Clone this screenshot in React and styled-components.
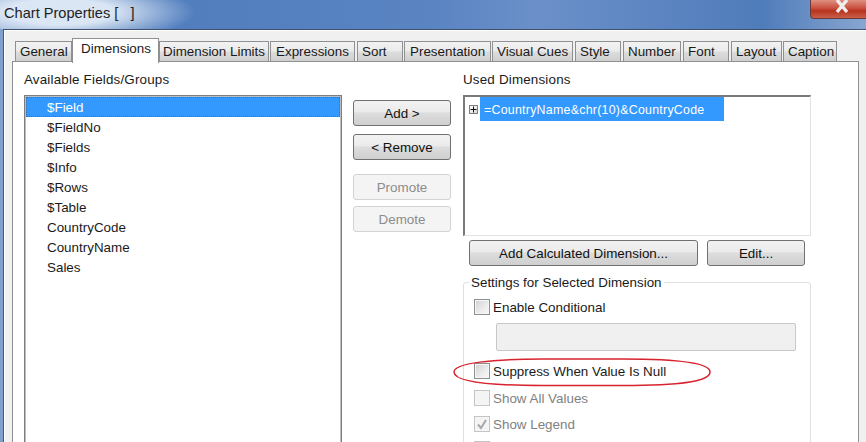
import React from "react";
import styled, { createGlobalStyle } from "styled-components";

const GlobalStyle = createGlobalStyle`
  html, body {
    margin: 0;
    padding: 0;
    overflow: hidden;
    background: #f0f0f0;
  }
  * {
    box-sizing: border-box;
  }
`;

const Window = styled.div`
  width: 866px;
  height: 442px;
  overflow: hidden;
  display: flex;
  flex-direction: column;
  font-family: "Liberation Sans", Arial, sans-serif;
  font-size: 13.4px;
  color: #1a1a1a;
  background: linear-gradient(90deg, #7fa0cf 0%, #4f7cbd 12%, #5a84c2 50%, #6b90c9 62%, #4f7cba 88%, #88a6d1 100%);
`;

const TitleBar = styled.div`
  height: 29px;
  flex: none;
  display: flex;
  justify-content: space-between;
  padding-left: 4px;
  background: radial-gradient(ellipse 135px 32px at 60px 12px, rgba(225, 235, 247, 0.95) 40%, rgba(225, 235, 247, 0) 100%);
`;

const Title = styled.div`
  font-size: 14.6px;
  line-height: 26px;
  color: #222;
`;

const CloseButton = styled.div`
  width: 56px;
  height: 19px;
  padding-left: 6px;
  display: flex;
  align-items: flex-start;
  justify-content: center;
  border: 1px solid #6b3a3a;
  border-top: none;
  border-right: none;
  border-radius: 0 0 0 4px;
  background: linear-gradient(180deg, #e09080 0%, #c9503f 45%, #b8331f 60%, #c8604a 100%);
`;

const WindowBody = styled.div`
  flex: 1;
  min-height: 0;
  margin-left: 3px;
  padding: 8px 0 0 8px;
  border-top: 1px solid #3e5170;
  border-left: 1px solid #46587a;
  background: #f0f0f0;
  box-shadow: inset 1px 1px 0 #fff;
`;

const TabRow = styled.div`
  position: relative;
  z-index: 1;
  height: 24px;
  padding-left: 3px;
  display: flex;
  align-items: flex-end;
`;

const Tab = styled.div`
  width: ${(p) => p.$w}px;
  flex: none;
  margin-left: ${(p) => p.$gap ?? 0}px;
  height: ${(p) => (p.$active ? 25 : 21)}px;
  margin-bottom: ${(p) => (p.$active ? -1 : 0)}px;
  padding-left: ${(p) => p.$pad}px;
  line-height: ${(p) => (p.$active ? 20 : 19)}px;
  white-space: nowrap;
  border: 1px solid #8e9092;
  border-bottom: ${(p) => (p.$active ? "none" : "1px solid #8e9092")};
  background: ${(p) => (p.$active ? "#fff" : "linear-gradient(180deg, #f2f2f2 0%, #ebebeb 45%, #dcdcdc 55%, #cfcfcf 100%)")};
`;

const Panel = styled.div`
  width: 847px;
  height: 400px;
  margin-top: -1px;
  padding: 9px 0 0 11px;
  display: flex;
  background: #fff;
  border: 1px solid #8e9092;
`;

const AvailableColumn = styled.div`
  width: 318px;
  flex: none;
`;

const Caption = styled.div`
  height: 24px;
  line-height: 18px;
  letter-spacing: 0.18px;
`;

const FieldList = styled.div`
  height: 360px;
  padding: 1px;
  border: 1px solid #7e7e7e;
  box-shadow: inset 0 0 0 1px #bdbdbd;
`;

const FieldRow = styled.div`
  height: 20px;
  line-height: 22px;
  padding-left: 21px;
  ${(p) => p.$selected && "background: #3399ff; color: #fff; outline: 1px dotted #4a6f9e; outline-offset: -1px;"}
`;

const ButtonColumn = styled.div`
  width: 98px;
  flex: none;
  margin: 29px 12px 0 11px;
  display: flex;
  flex-direction: column;
`;

const Button = styled.div`
  height: 26px;
  flex: none;
  width: ${(p) => (p.$w ? `${p.$w}px` : "100%")};
  margin-top: ${(p) => p.$top ?? 0}px;
  display: flex;
  align-items: center;
  justify-content: center;
  border-radius: 3px;
  border: 1px solid ${(p) => (p.$disabled ? "#d3d3d3" : "#707070")};
  color: ${(p) => (p.$disabled ? "#8c8c8c" : "#111")};
  background: ${(p) => (p.$disabled ? "#f4f4f4" : "linear-gradient(180deg, #f2f2f2 0%, #ebebeb 45%, #dddddd 50%, #cfcfcf 100%)")};
`;

const UsedColumn = styled.div`
  width: 348px;
  flex: none;
`;

const UsedList = styled.div`
  height: 141px;
  padding: 0 0 0 4px;
  display: flex;
  border: 1px solid #e3e3e3;
  border-top: 2px solid #7a7a7a;
  border-left: 2px solid #7a7a7a;
`;

const Expander = styled.div`
  width: 9px;
  height: 9px;
  margin: 8px 2px 0 0;
  flex: none;
  border: 1px solid #808080;
  background: linear-gradient(135deg, #fff 0%, #d8d8d8 100%);
  display: flex;
  align-items: center;
  justify-content: center;
`;

const ExpressionText = styled.div`
  width: 244px;
  height: 24px;
  padding-left: 4px;
  line-height: 26px;
  font-size: 12.4px;
  letter-spacing: 0.25px;
  white-space: nowrap;
  color: #fff;
  background: #3399ff;
`;

const ButtonRow = styled.div`
  margin: 4px 0 0 6px;
  display: flex;
  gap: 9px;
`;

const SettingsGroup = styled.div`
  position: relative;
  height: 200px;
  margin-top: 16px;
  padding: 16px 0 0 10px;
  border: 1px solid #dcdfe3;
  border-radius: 3px;
`;

const GroupLabel = styled.div`
  position: absolute;
  top: -8px;
  left: 5px;
  padding: 0 2px;
  line-height: 16px;
  background: #fff;
`;

const CheckRow = styled.div`
  height: 16px;
  margin-bottom: ${(p) => p.$gap ?? 10}px;
  display: flex;
  align-items: center;
  gap: 3px;
  color: ${(p) => (p.$disabled ? "#7f7f7f" : "#1a1a1a")};
`;

const CheckLabel = styled.span`
  padding-top: 2px;
  line-height: 16px;
`;

const CheckBox = styled.div`
  width: 16px;
  height: 16px;
  flex: none;
  display: flex;
  align-items: center;
  justify-content: center;
  border: 1px solid ${(p) => (p.$disabled ? "#c4c4c4" : "#8e8f8f")};
  background: ${(p) => (p.$disabled ? "#f4f4f4" : "linear-gradient(135deg, #d2d2d2 0%, #ececec 60%, #f8f8f8 100%)")};
  box-shadow: inset 0 0 0 1px #f6f6f6;
`;

const ConditionInput = styled.div`
  width: 300px;
  height: 28px;
  margin: 0 0 12px 22px;
  background: #f0f0f0;
  border: 1px solid #c8c8c8;
  border-radius: 2px;
`;

const Highlight = styled.svg`
  position: absolute;
  left: -11px;
  top: 75px;
  overflow: visible;
`;

const fields = ["$Field", "$FieldNo", "$Fields", "$Info", "$Rows", "$Table", "CountryCode", "CountryName", "Sales"];

const tabs = [
  { label: "General", w: 57, pad: 4 },
  { label: "Dimensions", w: 87, pad: 8, active: true },
  { label: "Dimension Limits", w: 110, pad: 3 },
  { label: "Expressions", w: 85, pad: 5, gap: 1 },
  { label: "Sort", w: 46, pad: 4, gap: 2 },
  { label: "Presentation", w: 87, pad: 5, gap: 1 },
  { label: "Visual Cues", w: 81, pad: 4, gap: 1 },
  { label: "Style", w: 46, pad: 4, gap: 2 },
  { label: "Number", w: 58, pad: 4, gap: 2 },
  { label: "Font", w: 46, pad: 4, gap: 2 },
  { label: "Layout", w: 51, pad: 4, gap: 2 },
  { label: "Caption", w: 54, pad: 4, gap: 1 },
];

const Check = ({ label, checked, disabled, gap }) => (
  <CheckRow $disabled={disabled} $gap={gap}>
    <CheckBox $disabled={disabled}>
      {checked && (
        <svg width="12" height="12" viewBox="0 0 12 12">
          <path d="M2 6.5 L5 10 L10 2" fill="none" stroke="#a8a8a8" strokeWidth="2" />
        </svg>
      )}
    </CheckBox>
    <CheckLabel>{label}</CheckLabel>
  </CheckRow>
);

export default function App() {
  return (
    <Window>
      <GlobalStyle />
      <TitleBar>
        <Title>Chart Properties [ &nbsp; ]</Title>
        <CloseButton>
          <svg width="16" height="14" viewBox="0 0 16 14">
            <path d="M3 0 L13 12 M13 0 L3 12" stroke="#eee" strokeWidth="3.4" fill="none" />
          </svg>
        </CloseButton>
      </TitleBar>
      <WindowBody>
        <TabRow>
          {tabs.map((t) => (
            <Tab key={t.label} $w={t.w} $pad={t.pad} $gap={t.gap} $active={t.active}>
              {t.label}
            </Tab>
          ))}
        </TabRow>
        <Panel>
          <AvailableColumn>
            <Caption>Available Fields/Groups</Caption>
            <FieldList>
              {fields.map((f, i) => (
                <FieldRow key={f} $selected={i === 0}>
                  {f}
                </FieldRow>
              ))}
            </FieldList>
          </AvailableColumn>
          <ButtonColumn>
            <Button>Add &gt;</Button>
            <Button $top={8}>&lt; Remove</Button>
            <Button $top={14} $disabled>Promote</Button>
            <Button $top={6} $disabled>Demote</Button>
          </ButtonColumn>
          <UsedColumn>
            <Caption>Used Dimensions</Caption>
            <UsedList>
              <Expander>
                <svg width="7" height="7" viewBox="0 0 7 7">
                  <path d="M0.5 3.5 H6.5 M3.5 0.5 V6.5" stroke="#111" strokeWidth="1" />
                </svg>
              </Expander>
              <ExpressionText>=CountryName&amp;chr(10)&amp;CountryCode</ExpressionText>
            </UsedList>
            <ButtonRow>
              <Button $w={229}>Add Calculated Dimension...</Button>
              <Button $w={98}>Edit...</Button>
            </ButtonRow>
            <SettingsGroup>
              <GroupLabel>Settings for Selected Dimension</GroupLabel>
              <Check label="Enable Conditional" gap={8} />
              <ConditionInput />
              <Check label="Suppress When Value Is Null" gap={11} />
              <Check label="Show All Values" disabled />
              <Check label="Show Legend" checked disabled gap={9} />
              <Check label="" disabled />
              <Highlight width="258" height="29" viewBox="0 0 258 29">
                <path
                  d="M1 14 C1 5 40 1 90 1 L170 1 C225 1 257 5 257 14 C257 24 225 27.5 170 27.5 L90 27.5 C40 27.5 1 24 1 14 Z"
                  fill="none"
                  stroke="#d8232f"
                  strokeWidth="1.5"
                />
              </Highlight>
            </SettingsGroup>
          </UsedColumn>
        </Panel>
      </WindowBody>
    </Window>
  );
}
